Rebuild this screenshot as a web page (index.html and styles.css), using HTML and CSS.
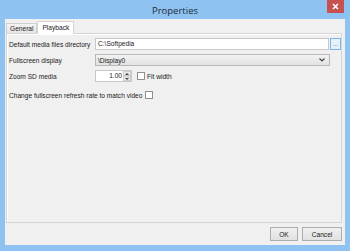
FILE: index.html
```html
<!DOCTYPE html>
<html lang="en">

<head>
    <meta charset="UTF-8">
    <title>Properties</title>
    <link rel="stylesheet" href="styles.css">
</head>

<body>
    <div class="window">
        <div class="titlebar">
            <span class="title">Properties</span>
            <button class="close-btn">
                <svg width="7" height="7" viewBox="0 0 7 7">
                    <path d="M1 1 L6 6 M6 1 L1 6" stroke="#fff" stroke-width="1.6" />
                </svg>
            </button>
        </div>

        <div class="client">
            <!-- tabs -->
            <div class="tabs">
                <div class="tab">General</div>
                <div class="tab active">Playback</div>
            </div>

            <div class="panel">
                <div class="form-grid">
                    <label class="lbl">Default media files directory</label>
                    <div class="path-row">
                        <div class="text-input">C:\Softpedia</div>
                        <button class="browse-btn">...</button>
                    </div>

                    <label class="lbl">Fullscreen display</label>
                    <div class="combo">
                        <span>\Display0</span>
                        <svg width="6" height="4" viewBox="0 0 6 4">
                            <path d="M0.5 0.5 L3 3 L5.5 0.5" fill="none" stroke="#444" stroke-width="1.2" />
                        </svg>
                    </div>

                    <label class="lbl">Zoom SD media</label>
                    <div class="zoom-row">
                        <div class="spin">
                            <span class="spin-value">1.00</span>
                            <div class="spin-btns">
                                <div class="spin-btn">
                                    <svg width="4" height="2" viewBox="0 0 4 2"><path d="M0 2 L2 0 L4 2 Z" fill="#444" /></svg>
                                </div>
                                <div class="spin-btn">
                                    <svg width="4" height="2" viewBox="0 0 4 2"><path d="M0 0 L2 2 L4 0 Z" fill="#444" /></svg>
                                </div>
                            </div>
                        </div>
                        <span class="check"></span>
                        <span class="check-label">Fit width</span>
                    </div>
                </div>

                <div class="refresh-row">
                    <span class="lbl">Change fullscreen refresh rate to match video</span>
                    <span class="check"></span>
                </div>
            </div>

            <div class="footer">
                <button class="btn ok">OK</button>
                <button class="btn">Cancel</button>
            </div>
        </div>
    </div>
</body>

</html>
```

FILE: styles.css
```css
* {
    margin: 0;
    padding: 0;
    box-sizing: border-box;
}

body {
    font-family: "Liberation Sans", Arial, sans-serif;
    font-size: 6.6px;
    color: #1a1a1a;
    background: #fff;
}

.window {
    width: 350px;
    height: 251px;
    background: #8ec3f1;
    display: flex;
    flex-direction: column;
    padding: 0 5px 6px 5px;
}

/* Title bar */
.titlebar {
    height: 19px;
    position: relative;
    display: flex;
    justify-content: center;
    align-items: center;
}

.title {
    font-family: "Open Sans", "Noto Sans", sans-serif;
    font-size: 9.5px;
    color: #1e2a38;
    padding-top: 1px;
}

.close-btn {
    position: absolute;
    top: 0;
    right: 1px;
    width: 17px;
    height: 13px;
    background: #c75050;
    border: none;
    display: flex;
    align-items: center;
    justify-content: center;
}

/* Client area */
.client {
    flex: 1;
    background: #f0f0f0;
    display: flex;
    flex-direction: column;
    padding: 1px 3px 0 1px;
}

.tabs {
    display: flex;
    align-items: flex-end;
    height: 13px;
    position: relative;
    z-index: 1;
}

.tab {
    height: 10px;
    padding: 0 3px;
    line-height: 9px;
    border: 1px solid #d0d0d0;
    border-bottom: none;
    background: linear-gradient(#f4f4f4, #e6e6e6);
    color: #222;
}

.tab.active {
    height: 13px;
    line-height: 11px;
    background: #fff;
    border-color: #d5d5d5;
    margin-bottom: -1px;
    padding: 0 4px;
}

.panel {
    flex: 1;
    background: #f0f0f0;
    border: 1px solid #d5d5d5;
    box-shadow: inset 1px 1px 0 #fff;
    padding: 4px 0 0 2px;
}

.form-grid {
    display: grid;
    grid-template-columns: 86px 1fr;
    row-gap: 4px;
    align-items: center;
}

.lbl {
    white-space: nowrap;
}

.path-row {
    display: flex;
    align-items: center;
}

.text-input {
    flex: 1;
    height: 12px;
    background: #fff;
    border: 1px solid #c8c8c8;
    padding-left: 2px;
    line-height: 10px;
}

.browse-btn {
    width: 11px;
    height: 12px;
    margin-left: 1px;
    border: 1px solid #7eb4ea;
    background: #e5f1fb;
    font-size: 6px;
    line-height: 8px;
    color: #333;
    font-family: inherit;
}

.combo {
    height: 12px;
    margin-right: 11px;
    border: 1px solid #b8b8b8;
    background: linear-gradient(#f2f2f2, #e2e2e2);
    display: flex;
    align-items: center;
    justify-content: space-between;
    padding: 0 4px 0 2px;
}

.zoom-row {
    display: flex;
    align-items: center;
}

.spin {
    width: 37px;
    height: 12px;
    background: #fff;
    border: 1px solid #c8c8c8;
    display: flex;
    align-items: stretch;
}

.spin-value {
    flex: 1;
    text-align: right;
    padding-right: 1px;
    line-height: 10px;
}

.spin-btns {
    width: 8px;
    display: flex;
    flex-direction: column;
}

.spin-btn {
    flex: 1;
    background: #e8e8e8;
    border: 1px solid #cfcfcf;
    display: flex;
    align-items: center;
    justify-content: center;
}

.check {
    width: 8px;
    height: 8px;
    background: #fff;
    border: 1px solid #8f8f8f;
    display: inline-block;
}

.zoom-row .check {
    margin-left: 5px;
}

.check-label {
    margin-left: 2px;
}

.refresh-row {
    display: flex;
    align-items: center;
    margin-top: 9px;
}

.refresh-row .check {
    margin-left: 3px;
}

/* Bottom buttons */
.footer {
    height: 22px;
    display: flex;
    justify-content: flex-end;
    align-items: center;
    gap: 4px;
    padding-right: 0;
}

.btn {
    width: 28px;
    height: 14px;
    border: 1px solid #adadad;
    background: linear-gradient(#f0f0f0, #e1e1e1);
    font-family: inherit;
    font-size: 6.6px;
    color: #1a1a1a;
}

.btn + .btn {
    width: 40px;
}
```
